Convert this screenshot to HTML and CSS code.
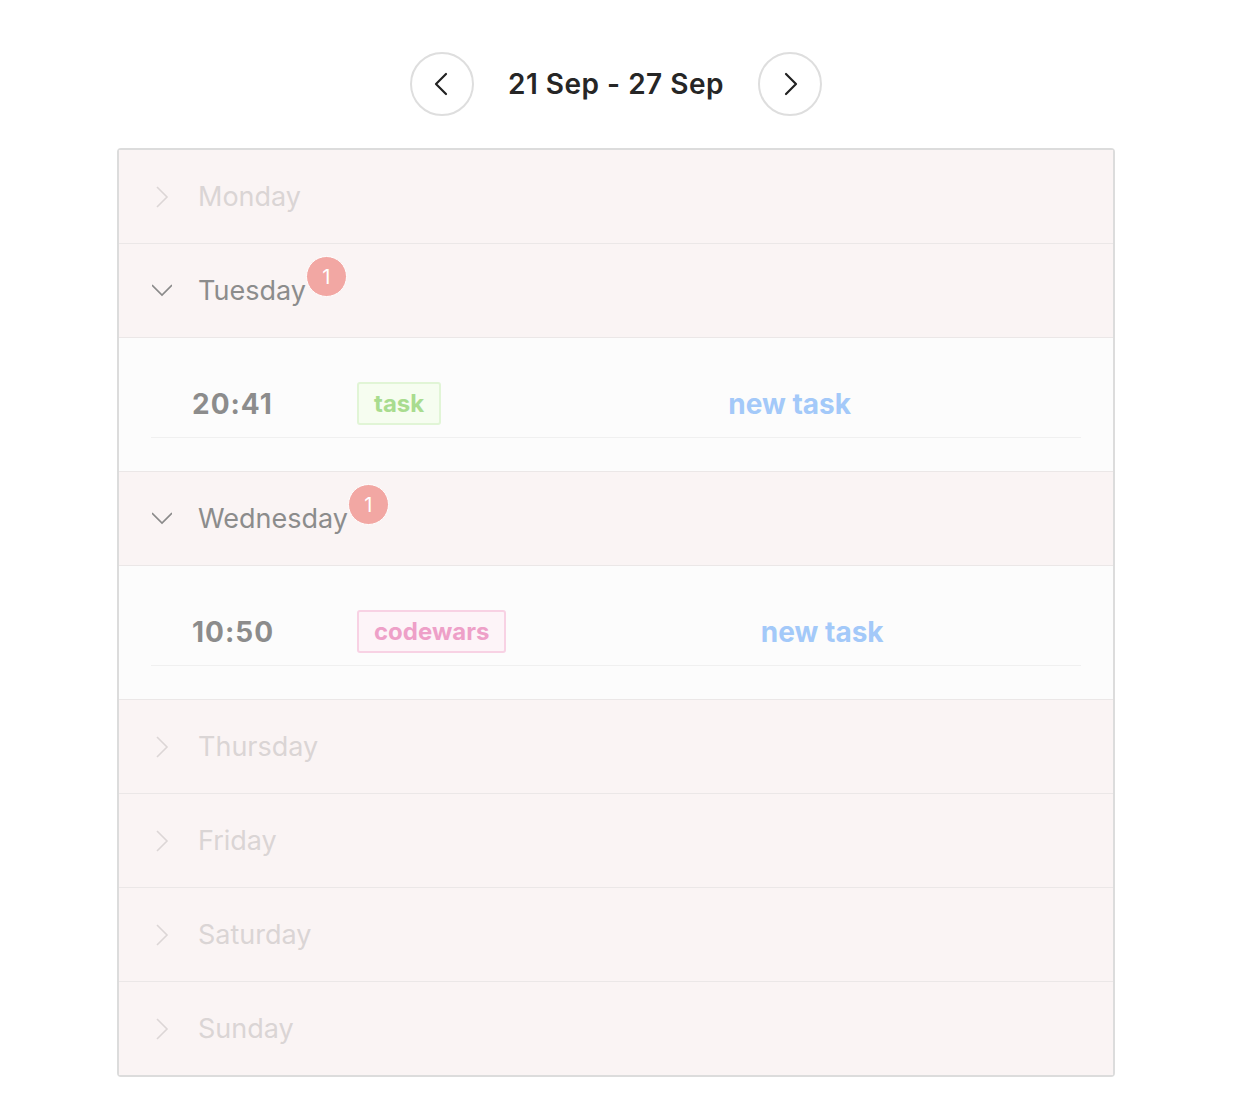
FILE: index.html
```html
<!DOCTYPE html>
<html>
<head>
<meta charset="utf-8">
<link rel="stylesheet" href="styles.css">
</head>
<body>
<div class="page">
  <div class="week-nav">
    <button class="nav-btn">
      <svg width="24" height="24" viewBox="0 0 24 24"><path d="M16 2 L6 12 L16 22" fill="none" stroke="#222" stroke-width="2.2" stroke-linecap="round" stroke-linejoin="round"/></svg>
    </button>
    <div class="range">21 Sep - 27 Sep</div>
    <button class="nav-btn">
      <svg width="24" height="24" viewBox="0 0 24 24"><path d="M8 2 L18 12 L8 22" fill="none" stroke="#222" stroke-width="2.2" stroke-linecap="round" stroke-linejoin="round"/></svg>
    </button>
  </div>

  <div class="days">
    <div class="day">
      <div class="day-head muted">
        <svg class="chev" width="20" height="22" viewBox="0 0 20 22"><path d="M5 1 L15 11 L5 21" fill="none" stroke="#dcd6d6" stroke-width="1.6"/></svg>
        <span class="day-name">Monday</span>
      </div>
    </div>

    <div class="day">
      <div class="day-head open">
        <svg class="chev" width="20" height="22" viewBox="0 0 20 22"><path d="M0 5 L10 15 L20 5" fill="none" stroke="#8a8a8a" stroke-width="1.6"/></svg>
        <span class="day-name">Tuesday<span class="badge">1</span></span>
      </div>
      <div class="day-body">
        <div class="task-row">
          <span class="time">20:41</span>
          <span class="tag tag-green">task</span>
          <span class="title">new task</span>
        </div>
      </div>
    </div>

    <div class="day">
      <div class="day-head open">
        <svg class="chev" width="20" height="22" viewBox="0 0 20 22"><path d="M0 5 L10 15 L20 5" fill="none" stroke="#8a8a8a" stroke-width="1.6"/></svg>
        <span class="day-name">Wednesday<span class="badge">1</span></span>
      </div>
      <div class="day-body">
        <div class="task-row">
          <span class="time">10:50</span>
          <span class="tag tag-pink">codewars</span>
          <span class="title">new task</span>
        </div>
      </div>
    </div>

    <div class="day">
      <div class="day-head muted">
        <svg class="chev" width="20" height="22" viewBox="0 0 20 22"><path d="M5 1 L15 11 L5 21" fill="none" stroke="#dcd6d6" stroke-width="1.6"/></svg>
        <span class="day-name">Thursday</span>
      </div>
    </div>
    <div class="day">
      <div class="day-head muted">
        <svg class="chev" width="20" height="22" viewBox="0 0 20 22"><path d="M5 1 L15 11 L5 21" fill="none" stroke="#dcd6d6" stroke-width="1.6"/></svg>
        <span class="day-name">Friday</span>
      </div>
    </div>
    <div class="day">
      <div class="day-head muted">
        <svg class="chev" width="20" height="22" viewBox="0 0 20 22"><path d="M5 1 L15 11 L5 21" fill="none" stroke="#dcd6d6" stroke-width="1.6"/></svg>
        <span class="day-name">Saturday</span>
      </div>
    </div>
    <div class="day last">
      <div class="day-head muted">
        <svg class="chev" width="20" height="22" viewBox="0 0 20 22"><path d="M5 1 L15 11 L5 21" fill="none" stroke="#dcd6d6" stroke-width="1.6"/></svg>
        <span class="day-name">Sunday</span>
      </div>
    </div>
  </div>
</div>
</body>
</html>
```

FILE: styles.css
```css
* { box-sizing: border-box; }
html, body { margin: 0; padding: 0; background: #fff; }
body { font-family: Inter, "Noto Sans", "Liberation Sans", sans-serif; }

.page {
  width: 1232px;
  padding-top: 52px;
  display: flex;
  flex-direction: column;
  align-items: center;
}

.week-nav {
  display: flex;
  align-items: center;
  gap: 34px;
  height: 64px;
}
.nav-btn {
  width: 64px;
  height: 64px;
  border-radius: 50%;
  border: 2px solid #dedede;
  background: #fff;
  display: flex;
  align-items: center;
  justify-content: center;
  padding: 0;
}
.range {
  font-size: 28px;
  font-weight: 600;
  color: #262626;
  letter-spacing: 0.5px;
}

.days {
  margin-top: 32px;
  width: 998px;
  border: 2px solid #dcdcdc;
  border-radius: 4px;
  background: #faf4f4;
}
.day { border-bottom: 1px solid #ebe7e7; }
.day.last { border-bottom: none; }

.day-head {
  height: 93px;
  display: flex;
  align-items: center;
  padding-left: 33px;
  background: #faf4f4;
}
.chev { flex: none; }
.day-name {
  position: relative;
  margin-left: 26px;
  font-size: 27px;
  color: #dad5d5;
}
.open .day-name { color: #8c8c8c; }

.badge {
  position: absolute;
  right: -41px;
  top: -18px;
  width: 41px;
  height: 41px;
  border-radius: 50%;
  background: #f2a7a3;
  border: 1px solid #fff;
  color: #fff;
  font-size: 20px;
  display: flex;
  align-items: center;
  justify-content: center;
  line-height: 1;
}

.day-body {
  background: #fcfcfc;
  border-top: 1px solid #ebe7e7;
  padding: 28px 32px 33px;
}
.task-row {
  display: flex;
  align-items: center;
  padding: 16px 42px 12px 41px;
  border-bottom: 1px solid #f0f0f0;
}
.time {
  width: 165px;
  font-size: 28px;
  font-weight: 700;
  color: #8c8c8c;
  letter-spacing: 1px;
}
.tag {
  height: 43px;
  padding: 0 15px;
  display: flex;
  align-items: center;
  font-size: 24px;
  font-weight: 700;
  border-radius: 3px;
  border: 2px solid;
}
.tag-green { color: #a9dc8f; border-color: #e1f5d6; background: #f6fdf0; }
.tag-pink { color: #eea0c8; border-color: #f8d2e4; background: #fdf4f8; }
.title {
  flex: 1;
  margin-left: 99px;
  text-align: center;
  font-size: 28px;
  font-weight: 700;
  color: #a3c9f9;
}
```
